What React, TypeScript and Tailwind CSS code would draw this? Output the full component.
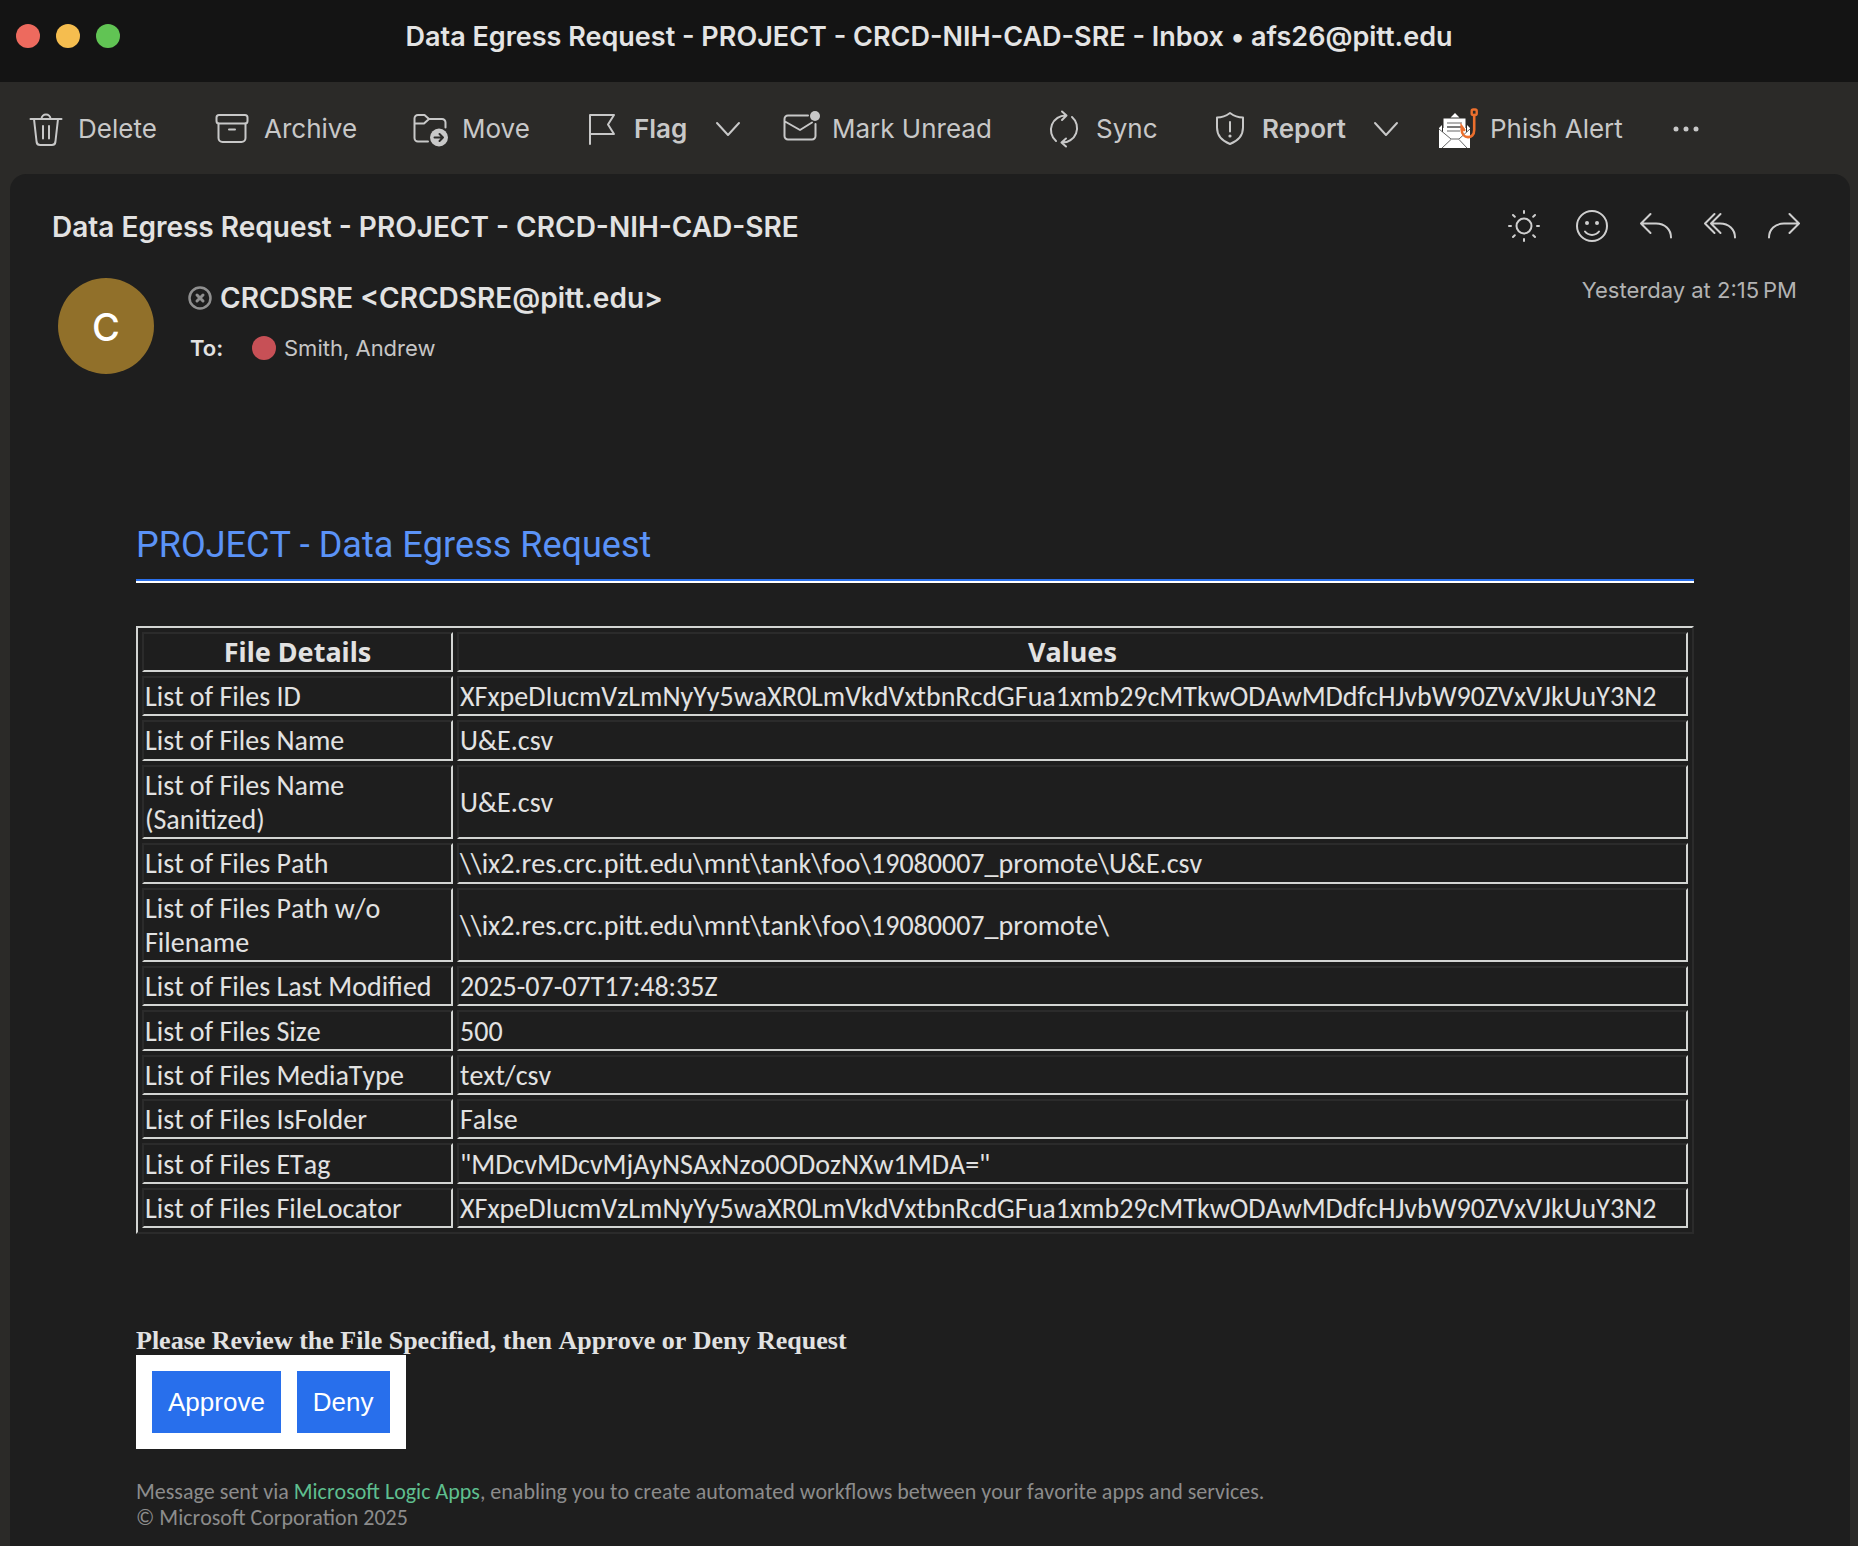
import React from "react";

type IconProps = { className?: string };

const stroke = {
  fill: "none",
  stroke: "currentColor",
  strokeWidth: 2,
  strokeLinecap: "round" as const,
  strokeLinejoin: "round" as const,
  "aria-hidden": true,
};

const TrashIcon = ({ className }: IconProps) => (
  <svg viewBox="0 0 34 36" className={className} {...stroke}>
    <path d="M1.500 8h31M12.500 8c0-6 9-6 9 0M5 8l2.600 23a3.500 3.500 0 0 0 3.500 3h11.800a3.500 3.500 0 0 0 3.500-3L29 8M14 15v12.500M20 15v12.500" />
  </svg>
);
const ArchiveIcon = ({ className }: IconProps) => (
  <svg viewBox="0 0 34 36" className={className} {...stroke}>
    <rect x="1.500" y="4" width="31" height="8.500" rx="2.500" />
    <path d="M3.500 12.500v14.500a4 4 0 0 0 4 4h19a4 4 0 0 0 4-4V12.500M14 18.500h6" />
  </svg>
);
const MoveIcon = ({ className }: IconProps) => (
  <svg viewBox="0 0 36 36" className={className} {...stroke}>
    <path d="M15 30.500H5a3.500 3.500 0 0 1-3.500-3.500V7.500A3.500 3.500 0 0 1 5 4h6.500l4.500 4h13A3.500 3.500 0 0 1 32.500 11.500v5M1.500 12.500H11l5-4.500" />
    <circle cx="26" cy="26.500" r="9" fill="currentColor" stroke="none" />
    <path d="M21.500 26.500h8.500M26.500 23L30 26.500l-3.500 3.500" stroke="#2b2a28" />
  </svg>
);
const FlagIcon = ({ className }: IconProps) => (
  <svg viewBox="0 0 28 36" className={className} {...stroke}>
    <path d="M2 33V4h24l-6 9.500 6 9.500H2" />
  </svg>
);
const ChevronIcon = ({ className }: IconProps) => (
  <svg viewBox="0 0 26 16" className={className} {...stroke}>
    <path d="M2 2l11 12L24 2" />
  </svg>
);
const UnreadIcon = ({ className }: IconProps) => (
  <svg viewBox="0 0 38 36" className={className} {...stroke}>
    <path d="M25 4.500H5A3.500 3.500 0 0 0 1.500 8v17A3.500 3.500 0 0 0 5 28.500h24a3.500 3.500 0 0 0 3.500-3.500V13M2 10.500l15 8.500L29 11.500" />
    <circle cx="32" cy="5" r="5" fill="currentColor" stroke="none" />
  </svg>
);
const SyncIcon = ({ className }: IconProps) => (
  <svg viewBox="0 0 34 38" className={className} {...stroke}>
    <path d="M9 31A14.500 14.500 0 0 1 19 5.500M15 1.500l4.500 4-4.500 4.500M25 7a14.500 14.500 0 0 1-10 25.500M19 28.500l-4.500 4 4.500 4" />
  </svg>
);
const ShieldIcon = ({ className }: IconProps) => (
  <svg viewBox="0 0 30 36" className={className} {...stroke}>
    <path d="M15 2c4 3 8 4.500 13 4.500v10c0 7-4 13-13 16.500C6 29.500 2 23.500 2 16.500v-10c5 0 9-1.500 13-4.500zM15 11v9.500" />
    <circle cx="15" cy="25" r="1.600" fill="currentColor" stroke="none" />
  </svg>
);
const PhishIcon = ({ className }: IconProps) => (
  <svg viewBox="0 0 40 42" className={className} aria-hidden>
    <path d="M16 5l4.500 4.500h-9zM0 20l4-4v4zM31 20l-4-4v4z" fill="#fff" />
    <path d="M0 20h31v20H0z" fill="#fff" />
    <path d="M4.500 10.500h22V27L20 32h-8l-7.500-5.500z" fill="#fff" />
    <path d="M3.500 24V10.500M27.500 24V10.500" stroke="#2b2a28" strokeWidth="1" />
    <path d="M8 15h15M8 23h13" stroke="#999" strokeWidth="1.300" />
    <path d="M8 19h15" stroke="#333" strokeWidth="1.300" />
    <path d="M0 21l12 10h8l11-10M12 31.500L3 40M20 31.500L28 40" stroke="#666" strokeWidth="1" fill="none" />
    <rect x="32.700" y="1.500" width="5" height="5.500" rx="1.500" fill="none" stroke="#ec6f2d" strokeWidth="2.400" />
    <path d="M35.200 7v15c0 10-12.500 9-12.500 0v-3.500l2.500 3.500" stroke="#ec6f2d" strokeWidth="2.600" fill="none" strokeLinecap="round" />
  </svg>
);
const DotsIcon = ({ className }: IconProps) => (
  <svg viewBox="0 0 26 6" className={className} fill="currentColor" aria-hidden>
    <circle cx="3" cy="3" r="2.500" />
    <circle cx="13" cy="3" r="2.500" />
    <circle cx="23" cy="3" r="2.500" />
  </svg>
);
const SunIcon = ({ className }: IconProps) => (
  <svg viewBox="0 0 34 34" className={className} {...stroke}>
    <circle cx="17" cy="17" r="7.500" />
    <path d="M17 2v2M17 30v2M2 17h2M30 17h2M6 6l1.800 1.800M26.200 26.200L28 28M28 6l-1.800 1.800M7.800 26.200L6 28" />
  </svg>
);
const SmileIcon = ({ className }: IconProps) => (
  <svg viewBox="0 0 34 34" className={className} {...stroke}>
    <circle cx="17" cy="17" r="15" />
    <path d="M10 22.500c3.500 4.500 10.500 4.500 14 0" />
    <circle cx="12" cy="14" r="2" fill="currentColor" stroke="none" />
    <circle cx="22" cy="14" r="2" fill="currentColor" stroke="none" />
  </svg>
);
const ReplyIcon = ({ className }: IconProps) => (
  <svg viewBox="0 0 34 34" className={className} {...stroke}>
    <path d="M11.500 5L2 14.500l9.500 9.500M2 14.500h15c9 0 15 6 15 14" />
  </svg>
);
const ReplyAllIcon = ({ className }: IconProps) => (
  <svg viewBox="0 0 34 34" className={className} {...stroke}>
    <path d="M11.500 5L2 14.500l9.500 9.500M17.500 5L8 14.500l9.500 9.500M8 14.500h9c9 0 15 6 15 14" />
  </svg>
);
const ForwardIcon = ({ className }: IconProps) => (
  <svg viewBox="0 0 34 34" className={className} {...stroke}>
    <path d="M22.500 5L32 14.500l-9.500 9.500M32 14.500H17C8 14.500 2 20.500 2 28.500" />
  </svg>
);
const BlockedIcon = ({ className }: IconProps) => (
  <svg viewBox="0 0 24 24" className={className} {...stroke}>
    <circle cx="12" cy="12" r="10.500" strokeWidth={2.500} />
    <path d="M9 9l6 6M15 9l-6 6" strokeWidth={3} />
  </svg>
);

const LONG_ID = "XFxpeDIucmVzLmNyYy5waXR0LmVkdVxtbnRcdGFua1xmb29cMTkwODAwMDdfcHJvbW90ZVxVJkUuY3N2";

const rows: [string, string][] = [
  ["List of Files ID", LONG_ID],
  ["List of Files Name", "U&E.csv"],
  ["List of Files Name (Sanitized)", "U&E.csv"],
  ["List of Files Path", "\\\\ix2.res.crc.pitt.edu\\mnt\\tank\\foo\\19080007_promote\\U&E.csv"],
  ["List of Files Path w/o Filename", "\\\\ix2.res.crc.pitt.edu\\mnt\\tank\\foo\\19080007_promote\\"],
  ["List of Files Last Modified", "2025-07-07T17:48:35Z"],
  ["List of Files Size", "500"],
  ["List of Files MediaType", "text/csv"],
  ["List of Files IsFolder", "False"],
  ["List of Files ETag", '"MDcvMDcvMjAyNSAxNzo0ODozNXw1MDA="'],
  ["List of Files FileLocator", LONG_ID],
];

const edge = "border-2 border-t-[#2b2b2b] border-l-[#2b2b2b] border-b-[#d3d5d3] border-r-[#d3d5d3] px-px";
const cell = `${edge} pt-0.5`;
const headCell = `${edge} py-px font-['Noto_Sans',sans-serif] text-[27px] leading-[34px] font-bold`;

function Tool({ width, children }: { width: string; children: React.ReactNode }) {
  return <button className={`flex items-center whitespace-nowrap ${width}`}>{children}</button>;
}

export default function App() {
  return (
    <div className="flex min-h-screen flex-col bg-[#2b2a28] font-['Inter',sans-serif] text-[#e2e2e2]">
      <header className="relative flex h-[82px] items-start justify-center bg-[#141414] pt-5">
        <div className="absolute left-4 top-6 flex gap-4">
          <button aria-label="Close" className="size-6 rounded-full bg-[#ed6a5e]" />
          <button aria-label="Minimize" className="size-6 rounded-full bg-[#f5bd4f]" />
          <button aria-label="Zoom" className="size-6 rounded-full bg-[#61c454]" />
        </div>
        <h1 className="text-[27px] leading-[34px] font-semibold text-[#e4e4e4]">
          Data Egress Request - PROJECT - CRCD-NIH-CAD-SRE - Inbox • afs26@pitt.edu
        </h1>
      </header>

      <nav className="flex h-[92px] items-center pt-0.5 pl-[29px] text-[26px] leading-8 text-[#c8c8c8]">
        <Tool width="w-[186px] gap-[15px]"><TrashIcon className="h-9 w-[34px]" />Delete</Tool>
        <Tool width="w-[198px] gap-[15px]"><ArchiveIcon className="h-9 w-[34px]" />Archive</Tool>
        <Tool width="w-[175px] gap-[13px]"><MoveIcon className="h-9 w-9" />Move</Tool>
        <Tool width="w-[127px] gap-[18px]">
          <FlagIcon className="h-9 w-7" /><span className="font-semibold">Flag</span>
        </Tool>
        <button aria-label="Flag options" className="w-[68px]"><ChevronIcon className="h-4 w-[26px]" /></button>
        <Tool width="w-[264px] gap-[11px]"><UnreadIcon className="h-9 w-[38px]" />Mark Unread</Tool>
        <Tool width="w-[168px] gap-[15px]"><SyncIcon className="h-[38px] w-[34px]" />Sync</Tool>
        <Tool width="w-[158px] gap-[17px]">
          <ShieldIcon className="h-9 w-[30px]" /><span className="font-semibold">Report</span>
        </Tool>
        <button aria-label="Report options" className="w-[66px]"><ChevronIcon className="h-4 w-[26px]" /></button>
        <Tool width="w-[234px] gap-[11px]"><PhishIcon className="h-[42px] w-10" />Phish Alert</Tool>
        <button aria-label="More"><DotsIcon className="h-[6px] w-[26px]" /></button>
      </nav>

      <main className="ml-[10px] mr-2 flex-1 rounded-t-2xl bg-[#1e1e1e]">
        <section className="flex justify-between pl-[42px] pr-[49px] pt-[35px]">
          <div>
            <h2 className="text-[28px] leading-9 font-semibold">
              Data Egress Request - PROJECT - CRCD-NIH-CAD-SRE
            </h2>
            <div className="mt-[33px] flex gap-9 pl-[6px]">
              <div className="flex size-24 items-center justify-center rounded-full bg-[#91702a] pt-0.5 text-[38px] font-medium text-white">
                C
              </div>
              <div className="pt-0.5">
                <div className="flex items-center gap-2 text-[28px] leading-9 font-semibold">
                  <BlockedIcon className="-ml-0.5 size-6 text-[#8f8f8f]" />
                  CRCDSRE &lt;CRCDSRE@pitt.edu&gt;
                </div>
                <div className="mt-4 flex items-center text-[22px] leading-8">
                  <span className="w-[62px] font-semibold">To:</span>
                  <span className="mr-2 size-6 rounded-full bg-[#c75056]" />
                  <span className="text-[#c6c6c6]">Smith, Andrew</span>
                </div>
              </div>
            </div>
          </div>
          <div className="flex flex-col items-end text-[#cfcfcf]">
            <div className="flex">
              <button aria-label="Light mode" className="mr-[34px]"><SunIcon className="size-[34px]" /></button>
              <button aria-label="React" className="mr-[30px]"><SmileIcon className="size-[34px]" /></button>
              <button aria-label="Reply" className="mr-[30px]"><ReplyIcon className="size-[34px]" /></button>
              <button aria-label="Reply all" className="mr-[30px]"><ReplyAllIcon className="size-[34px]" /></button>
              <button aria-label="Forward"><ForwardIcon className="size-[34px]" /></button>
            </div>
            <time className="mt-[31px] mr-1 text-[22px] leading-8 text-[#b3b3b3]">Yesterday at 2:15&#8201;PM</time>
          </div>
        </section>

        <article className="mr-[156px] ml-[126px] mt-[146px] font-['Carlito','Lato',sans-serif] [font-kerning:none]">
          <h3 className="font-['Roboto',sans-serif] text-[36px] leading-[50px] text-[#5b93f7]">
            PROJECT - Data Egress Request
          </h3>
          <div className="mt-[9px] h-1 border-t-2 border-b-2 border-t-[#2a70ec] border-b-white" />

          <table className="mt-[43px] h-[608px] w-full table-fixed border-separate border-spacing-1 border-2 border-t-[#d3d5d3] border-l-[#d3d5d3] border-r-[#2b2b2b] border-b-[#2b2b2b] text-[28px] leading-[34px] text-[#e2e2e2]">
            <colgroup>
              <col className="w-[311px]" />
              <col />
            </colgroup>
            <thead>
              <tr>
                <th scope="col" className={headCell}>File Details</th>
                <th scope="col" className={headCell}>Values</th>
              </tr>
            </thead>
            <tbody>
              {rows.map(([name, value]) => (
                <tr key={name}>
                  <td className={cell}>{name}</td>
                  <td className={`${cell} whitespace-nowrap`}>{value}</td>
                </tr>
              ))}
            </tbody>
          </table>

          <p className="mt-[92px] font-['Liberation_Serif',serif] text-[26px] leading-[29px] font-bold">
            Please Review the File Specified, then Approve or Deny Request
          </p>
          <div className="inline-flex gap-4 bg-white p-4 font-['Liberation_Sans',sans-serif] text-[26px] leading-[30px] text-white">
            <button className="bg-[#286fec] p-4">Approve</button>
            <button className="bg-[#286fec] p-4">Deny</button>
          </div>
          <p className="mt-[30px] text-[22px] leading-[26px] text-[#8c8c8c]">
            Message sent via <a href="#" className="text-[#5fbf8f]">Microsoft Logic Apps</a>, enabling you to create
            automated workflows between your favorite apps and services.
            <br />© Microsoft Corporation 2025
          </p>
        </article>
      </main>
    </div>
  );
}
